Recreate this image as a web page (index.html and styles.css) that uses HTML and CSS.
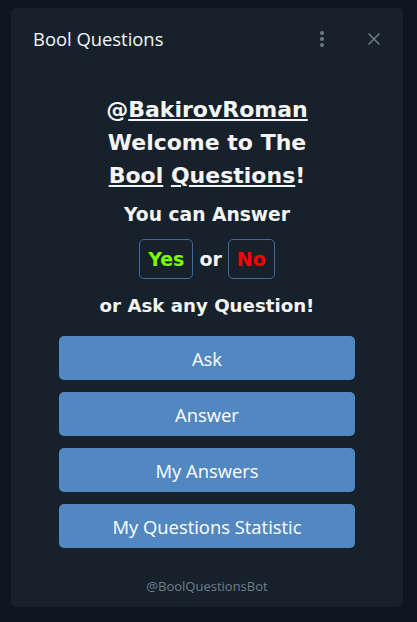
FILE: index.html
```html
<!DOCTYPE html>
<html>
<head>
<meta charset="utf-8">
<link rel="stylesheet" href="styles.css">
</head>
<body>
<div class="panel">
  <div class="header">
    <div class="title">Bool Questions</div>
    <div class="icons">
      <svg class="more" width="6" height="18" viewBox="0 0 6 18"><circle cx="3" cy="3" r="2" fill="#6c7883"/><circle cx="3" cy="9" r="2" fill="#6c7883"/><circle cx="3" cy="15" r="2" fill="#6c7883"/></svg>
      <svg class="close" width="14" height="14" viewBox="0 0 14 14"><path d="M1.5 1.5 L12.5 12.5 M12.5 1.5 L1.5 12.5" stroke="#6c7883" stroke-width="1.5" fill="none"/></svg>
    </div>
  </div>
  <div class="content">
    <div class="welcome">
      <div>@<u>BakirovRoman</u></div>
      <div>Welcome to The</div>
      <div><u>Bool</u> <u>Questions</u>!</div>
    </div>
    <div class="sub">You can Answer</div>
    <div class="choices">
      <span class="box yes">Yes</span>
      <span class="or">or</span>
      <span class="box no">No</span>
    </div>
    <div class="sub ask">or Ask any Question!</div>
    <div class="buttons">
      <div class="btn">Ask</div>
      <div class="btn">Answer</div>
      <div class="btn">My Answers</div>
      <div class="btn">My Questions Statistic</div>
    </div>
  </div>
  <div class="footer">@BoolQuestionsBot</div>
</div>
</body>
</html>
```
FILE: styles.css
```css
html, body {
  margin: 0;
  padding: 0;
  background: #0e1621;
  height: 622px;
  overflow: hidden;
}
.panel {
  margin: 8px 0 0 11px;
  width: 392px;
  height: 599px;
  background: #17212b;
  border-radius: 6px;
  display: flex;
  flex-direction: column;
  box-sizing: border-box;
  font-family: "Open Sans", sans-serif;
  color: #f5f5f5;
}
.header {
  display: flex;
  align-items: center;
  justify-content: space-between;
  height: 61px;
  padding: 0 22px 0 22px;
}
.title {
  font-size: 18.4px;
  font-weight: 500;
  color: #f5f5f5;
}
.icons {
  display: flex;
  align-items: center;
  gap: 42px;
}
.content {
  display: flex;
  flex-direction: column;
  align-items: center;
  font-family: "DejaVu Sans", sans-serif;
  font-weight: bold;
  padding-top: 24px;
  flex: 1;
}
.welcome {
  font-size: 22px;
  line-height: 33px;
  text-align: center;
}
.welcome u {
  text-decoration-thickness: 2px;
  text-underline-offset: 2px;
}
.sub {
  font-size: 18.7px;
  margin-top: 12px;
}
.choices {
  display: flex;
  align-items: center;
  gap: 6px;
  margin-top: 14px;
  font-size: 19px;
}
.box {
  border: 1px solid #3e6aa0;
  border-radius: 5px;
  padding: 0 8px;
  height: 38px;
  display: flex;
  align-items: center;
}
.yes { color: #7cfc00; }
.no { color: #ff0000; }
.or { color: #f5f5f5; }
.sub.ask {
  font-size: 18.2px;
  margin-top: 16px;
}
.buttons {
  display: flex;
  flex-direction: column;
  gap: 12px;
  margin-top: 20px;
  font-family: "Open Sans", sans-serif;
  font-weight: normal;
}
.btn {
  width: 296px;
  height: 44px;
  background: #5288c1;
  border-radius: 5px;
  display: flex;
  align-items: center;
  justify-content: center;
  font-size: 18.4px;
  color: #ffffff;
}
.footer {
  text-align: center;
  font-size: 13px;
  color: #6d7f8f;
  padding-bottom: 12px;
}
```
